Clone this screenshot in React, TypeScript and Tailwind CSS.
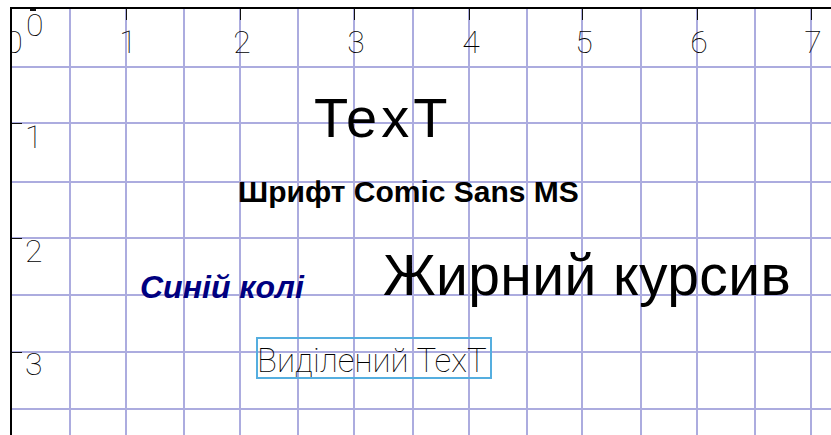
import React from "react";

// Grid positions (canvas-local, px) and ruler ticks
const vLines = [58, 114, 172, 228, 286, 342, 401, 457, 515, 570, 629, 685, 743, 799];
const hLines = [58, 114, 173, 229, 286, 343, 400];
const topTicks = [114, 228, 342, 457, 570, 685, 799];
const leftTicks = [114, 229, 343];

function Grid() {
  return (
    <svg className="absolute left-0 top-0" width={819} height={426}>
      {vLines.map((x) => (
        <rect key={`v${x}`} x={x - 1} y={0} width={2} height={426} fill="#acacdf" />
      ))}
      {hLines.map((y) => (
        <rect key={`h${y}`} x={0} y={y - 1} width={819} height={2} fill="#acacdf" />
      ))}
      {topTicks.map((x) => (
        <rect key={`t${x}`} x={x} y={0} width={1} height={11} fill="#111" />
      ))}
      {leftTicks.map((y) => (
        <rect key={`l${y}`} x={0} y={y} width={10} height={1} fill="#111" />
      ))}
      <rect x={18} y={0} width={6} height={2} fill="#111" />
    </svg>
  );
}

const digit = "absolute leading-none text-[32px] font-thin text-black font-['Roboto','Liberation_Sans',sans-serif]";

export default function App() {
  return (
    <div className="relative w-[831px] h-[435px] bg-white overflow-hidden">
      <div className="absolute left-[10px] top-[7px] w-[821px] h-[428px] border-l-2 border-t-2 border-black overflow-hidden">
        <Grid />

        {/* top ruler labels */}
        <div className={`${digit} left-[2px] top-[17px] -translate-x-1/2`}>0</div>
        <div className={`${digit} left-[116px] top-[17px] -translate-x-1/2`}>1</div>
        <div className={`${digit} left-[230px] top-[17px] -translate-x-1/2`}>2</div>
        <div className={`${digit} left-[344px] top-[17px] -translate-x-1/2`}>3</div>
        <div className={`${digit} left-[459px] top-[17px] -translate-x-1/2`}>4</div>
        <div className={`${digit} left-[572px] top-[17px] -translate-x-1/2`}>5</div>
        <div className={`${digit} left-[687px] top-[17px] -translate-x-1/2`}>6</div>
        <div className={`${digit} left-[801px] top-[17px] -translate-x-1/2`}>7</div>

        {/* left ruler labels */}
        <div className={`${digit} left-[14px] top-[0px]`}>0</div>
        <div className={`${digit} left-[13px] top-[112px]`}>1</div>
        <div className={`${digit} left-[13px] top-[226px]`}>2</div>
        <div className={`${digit} left-[13px] top-[339px]`}>3</div>

        {/* text objects */}
        <div className="absolute left-[302px] top-[81px] leading-none text-[56px] tracking-[4px] text-black font-['Liberation_Sans',Arial,sans-serif] whitespace-nowrap">
          TexT
        </div>
        <div className="absolute left-[226px] top-[168px] leading-none text-[30px] font-bold text-black font-['Comic_Sans_MS','Liberation_Sans',sans-serif] whitespace-nowrap">
          Шрифт Comic Sans MS
        </div>
        <div className="absolute left-[128px] top-[262px] leading-none text-[32px] font-bold italic text-[#000080] font-['Comic_Sans_MS','Liberation_Sans',sans-serif] whitespace-nowrap">
          Синій колі
        </div>
        <div className="absolute left-[371px] top-[238px] leading-none text-[57px] tracking-[0.4px] text-black font-['Liberation_Sans',Arial,sans-serif] whitespace-nowrap">
          Жирний курсив
        </div>

        {/* selected text with its frame */}
        <div className="absolute left-[244px] top-[328px] w-[236px] h-[42px] border-2 border-[#55aedf]" />
        <div className="absolute left-[245px] top-[335px] leading-none text-[33px] font-thin text-black font-['Roboto','Liberation_Sans',sans-serif] whitespace-nowrap">
          Виділений TexT
        </div>
      </div>
    </div>
  );
}
